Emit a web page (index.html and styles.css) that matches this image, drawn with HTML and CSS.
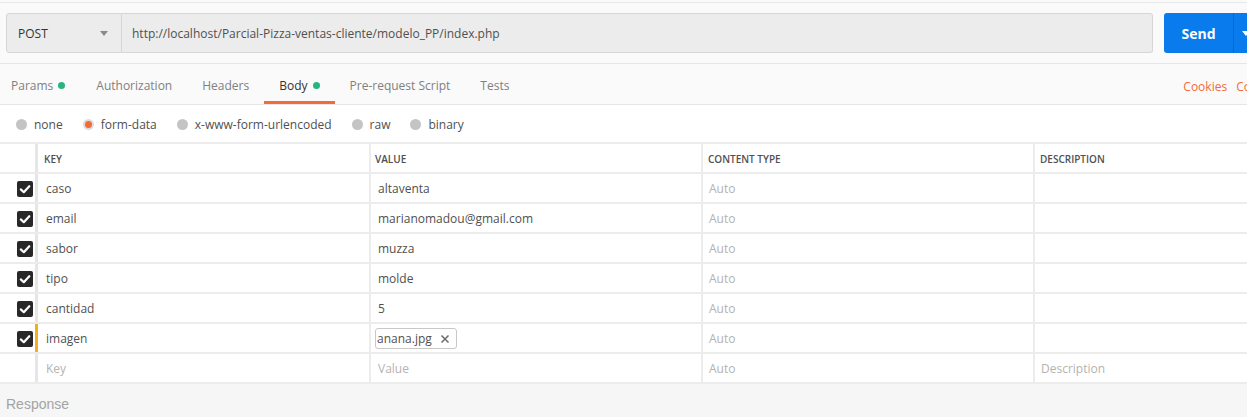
FILE: index.html
```html
<!DOCTYPE html>
<html lang="es">
<head>
<meta charset="utf-8">
<title>Postman</title>
<link rel="stylesheet" href="styles.css">
</head>
<body>
<div class="app">
  <div class="top-strip"></div>
  <div class="reqbar">
    <div class="method">
      <span>POST</span>
      <span class="caret"></span>
    </div>
    <div class="url">http://localhost/Parcial-Pizza-ventas-cliente/modelo_PP/index.php</div>
    <div class="send">
      <span class="send-main">Send</span>
      <span class="send-drop"><span class="caret white"></span></span>
    </div>
  </div>
  <div class="tabs">
    <div class="tab first">Params <span class="dot"></span></div>
    <div class="tab">Authorization</div>
    <div class="tab">Headers</div>
    <div class="tab active">Body <span class="dot"></span></div>
    <div class="tab">Pre-request Script</div>
    <div class="tab">Tests</div>
    <div class="tab-links">
      <span class="link">Cookies</span>
      <span class="link">Code</span>
    </div>
  </div>
  <div class="radios">
    <label class="radio"><span class="circle"></span>none</label>
    <label class="radio"><span class="circle on"></span>form-data</label>
    <label class="radio"><span class="circle"></span>x-www-form-urlencoded</label>
    <label class="radio"><span class="circle"></span>raw</label>
    <label class="radio"><span class="circle"></span>binary</label>
  </div>
  <div class="table">
    <div class="row head">
      <div class="cell chk"></div>
      <div class="cell key">KEY</div>
      <div class="cell val">VALUE</div>
      <div class="cell ctype">CONTENT TYPE</div>
      <div class="cell desc">DESCRIPTION</div>
    </div>
    <div class="row">
      <div class="cell chk"><svg class="cb" viewBox="0 0 16 16" width="16" height="16"><rect width="16" height="16" rx="2" fill="#282828"/><path d="M3.8 8.4 L6.8 11.2 L12.3 5.2" fill="none" stroke="#fff" stroke-width="2.2" stroke-linecap="round" stroke-linejoin="round"/></svg></div>
      <div class="cell key">caso</div>
      <div class="cell val">altaventa</div>
      <div class="cell ctype ph">Auto</div>
      <div class="cell desc"></div>
    </div>
    <div class="row">
      <div class="cell chk"><svg class="cb" viewBox="0 0 16 16" width="16" height="16"><rect width="16" height="16" rx="2" fill="#282828"/><path d="M3.8 8.4 L6.8 11.2 L12.3 5.2" fill="none" stroke="#fff" stroke-width="2.2" stroke-linecap="round" stroke-linejoin="round"/></svg></div>
      <div class="cell key">email</div>
      <div class="cell val">marianomadou@gmail.com</div>
      <div class="cell ctype ph">Auto</div>
      <div class="cell desc"></div>
    </div>
    <div class="row">
      <div class="cell chk"><svg class="cb" viewBox="0 0 16 16" width="16" height="16"><rect width="16" height="16" rx="2" fill="#282828"/><path d="M3.8 8.4 L6.8 11.2 L12.3 5.2" fill="none" stroke="#fff" stroke-width="2.2" stroke-linecap="round" stroke-linejoin="round"/></svg></div>
      <div class="cell key">sabor</div>
      <div class="cell val">muzza</div>
      <div class="cell ctype ph">Auto</div>
      <div class="cell desc"></div>
    </div>
    <div class="row">
      <div class="cell chk"><svg class="cb" viewBox="0 0 16 16" width="16" height="16"><rect width="16" height="16" rx="2" fill="#282828"/><path d="M3.8 8.4 L6.8 11.2 L12.3 5.2" fill="none" stroke="#fff" stroke-width="2.2" stroke-linecap="round" stroke-linejoin="round"/></svg></div>
      <div class="cell key">tipo</div>
      <div class="cell val">molde</div>
      <div class="cell ctype ph">Auto</div>
      <div class="cell desc"></div>
    </div>
    <div class="row">
      <div class="cell chk"><svg class="cb" viewBox="0 0 16 16" width="16" height="16"><rect width="16" height="16" rx="2" fill="#282828"/><path d="M3.8 8.4 L6.8 11.2 L12.3 5.2" fill="none" stroke="#fff" stroke-width="2.2" stroke-linecap="round" stroke-linejoin="round"/></svg></div>
      <div class="cell key">cantidad</div>
      <div class="cell val">5</div>
      <div class="cell ctype ph">Auto</div>
      <div class="cell desc"></div>
    </div>
    <div class="row">
      <div class="cell chk"><svg class="cb" viewBox="0 0 16 16" width="16" height="16"><rect width="16" height="16" rx="2" fill="#282828"/><path d="M3.8 8.4 L6.8 11.2 L12.3 5.2" fill="none" stroke="#fff" stroke-width="2.2" stroke-linecap="round" stroke-linejoin="round"/></svg></div>
      <div class="cell key focus">imagen</div>
      <div class="cell val"><span class="chip">anana.jpg<svg class="x" viewBox="0 0 10 10" width="10" height="10"><path d="M1.5 1.5 L8.5 8.5 M8.5 1.5 L1.5 8.5" stroke="#6a6a6a" stroke-width="1.5" fill="none"/></svg></span></div>
      <div class="cell ctype ph">Auto</div>
      <div class="cell desc"></div>
    </div>
    <div class="row">
      <div class="cell chk"></div>
      <div class="cell key ph">Key</div>
      <div class="cell val ph">Value</div>
      <div class="cell ctype ph">Auto</div>
      <div class="cell desc ph">Description</div>
    </div>
  </div>
  <div class="response">Response</div>
</div>
</body>
</html>
```

FILE: styles.css
```css
html, body {
  margin: 0;
  padding: 0;
}
body {
  width: 1247px;
  height: 417px;
  overflow: hidden;
  background: #f6f6f6;
  font-family: "Open Sans", "DejaVu Sans", sans-serif;
  font-size: 12px;
  color: #505050;
}
.app {
  width: 1247px;
  overflow: hidden;
}
.top-strip {
  height: 2px;
  background: #fafafa;
  border-bottom: 1px solid #e8e8e8;
}
.reqbar {
  display: flex;
  align-items: stretch;
  height: 40px;
  padding: 10px 0 10px 6px;
  background: #fafafa;
  border-bottom: 1px solid #e6e6e6;
}
.method {
  box-sizing: border-box;
  width: 116px;
  flex-shrink: 0;
  display: flex;
  align-items: center;
  justify-content: space-between;
  padding: 0 13px 0 11px;
  background: #ececec;
  border: 1px solid #d6d6d6;
  border-radius: 3px 0 0 3px;
  color: #333;
  font-size: 12px;
}
.caret {
  width: 0;
  height: 0;
  border-left: 4px solid transparent;
  border-right: 4px solid transparent;
  border-top: 5px solid #8a8a8a;
}
.caret.white {
  border-top-color: #fff;
}
.url {
  box-sizing: border-box;
  width: 1031px;
  flex-shrink: 0;
  display: flex;
  align-items: center;
  padding-left: 10px;
  background: #ececec;
  border: 1px solid #d6d6d6;
  border-left: none;
  border-radius: 0 3px 3px 0;
  color: #505050;
}
.send {
  display: flex;
  margin-left: 11px;
  flex-shrink: 0;
}
.send-main {
  width: 69px;
  display: flex;
  align-items: center;
  justify-content: center;
  background: #097bed;
  color: #fff;
  font-weight: 700;
  font-size: 14px;
  border-radius: 3px 0 0 3px;
}
.send-drop {
  width: 30px;
  display: flex;
  align-items: center;
  padding-left: 8px;
  box-sizing: border-box;
  background: #097bed;
  border-left: 1px solid #0a6acc;
}
.tabs {
  display: flex;
  align-items: stretch;
  height: 40px;
  background: #fafafa;
  border-bottom: 1px solid #e6e6e6;
}
.tab {
  display: flex;
  align-items: center;
  gap: 5px;
  padding: 5px 15px 0;
  color: #808080;
  box-sizing: border-box;
  border-bottom: 3px solid transparent;
}
.tab.first {
  padding-left: 11px;
}
.tab:nth-child(2) {
  padding-left: 16px;
}
.tab.active {
  color: #333;
  border-bottom-color: #f26b3a;
}
.dot {
  width: 7px;
  height: 7px;
  border-radius: 50%;
  background: #26b47f;
}
.tab-links {
  margin-left: auto;
  display: flex;
  align-items: center;
  gap: 9px;
  margin-right: -18px;
  padding-top: 5px;
  flex-shrink: 0;
}
.link {
  color: #f26b3a;
  white-space: nowrap;
}
.radios {
  height: 37px;
  display: flex;
  align-items: center;
  gap: 20px;
  padding-left: 16px;
  padding-top: 1px;
  box-sizing: border-box;
  background: #fff;
}
.radio {
  display: flex;
  align-items: center;
  gap: 7px;
  color: #505050;
}
.circle {
  box-sizing: border-box;
  width: 11px;
  height: 11px;
  border-radius: 50%;
  background: #c4c4c4;
}
.circle.on {
  background: #f26b3a;
  border: 2px solid #dcdcdc;
}
.table {
  background: #fff;
  border-top: 2px solid #ececec;
}
.row {
  display: grid;
  grid-template-columns: 35px 334px 332px 332px 1fr;
  height: 30px;
  box-sizing: border-box;
  border-bottom: 2px solid #ececec;
}
.cell {
  display: flex;
  align-items: center;
  box-sizing: border-box;
  border-left: 2px solid #ececec;
  padding: 1px 7px 0 6px;
  white-space: nowrap;
  overflow: hidden;
}
.cell.chk {
  border-left: none;
  justify-content: flex-end;
  padding: 1px 2px 0 0;
}
.cell.key {
  border-left: 3px solid #e6e6e6;
  padding-left: 8px;
}
.cell.key.focus {
  border-left-color: #f2b01e;
}
.cell.val {
  padding-left: 7px;
}
.cell.ctype, .cell.desc {
  padding-left: 6px;
}
.head .cell {
  font-size: 10px;
  font-weight: 600;
  color: #505050;
  padding-left: 5px;
}
.head .cell.key {
  padding-left: 6px;
}
.head .cell.val {
  padding-left: 4px;
}
.cb {
  display: block;
}
.ph {
  color: #b3b3b3;
}
.chip {
  display: inline-flex;
  align-items: center;
  gap: 8px;
  height: 19px;
  margin-left: -3px;
  padding: 0 6px 0 1px;
  border: 1px solid #c8c8c8;
  border-radius: 3px;
  color: #505050;
}
.x {
  display: block;
}
.response {
  height: 33px;
  box-sizing: border-box;
  display: flex;
  align-items: center;
  padding-left: 6px;
  padding-top: 7px;
  font-family: "Liberation Sans", Arial, sans-serif;
  font-size: 14px;
  color: #a3a3a3;
  background: #f6f6f6;
}
```
